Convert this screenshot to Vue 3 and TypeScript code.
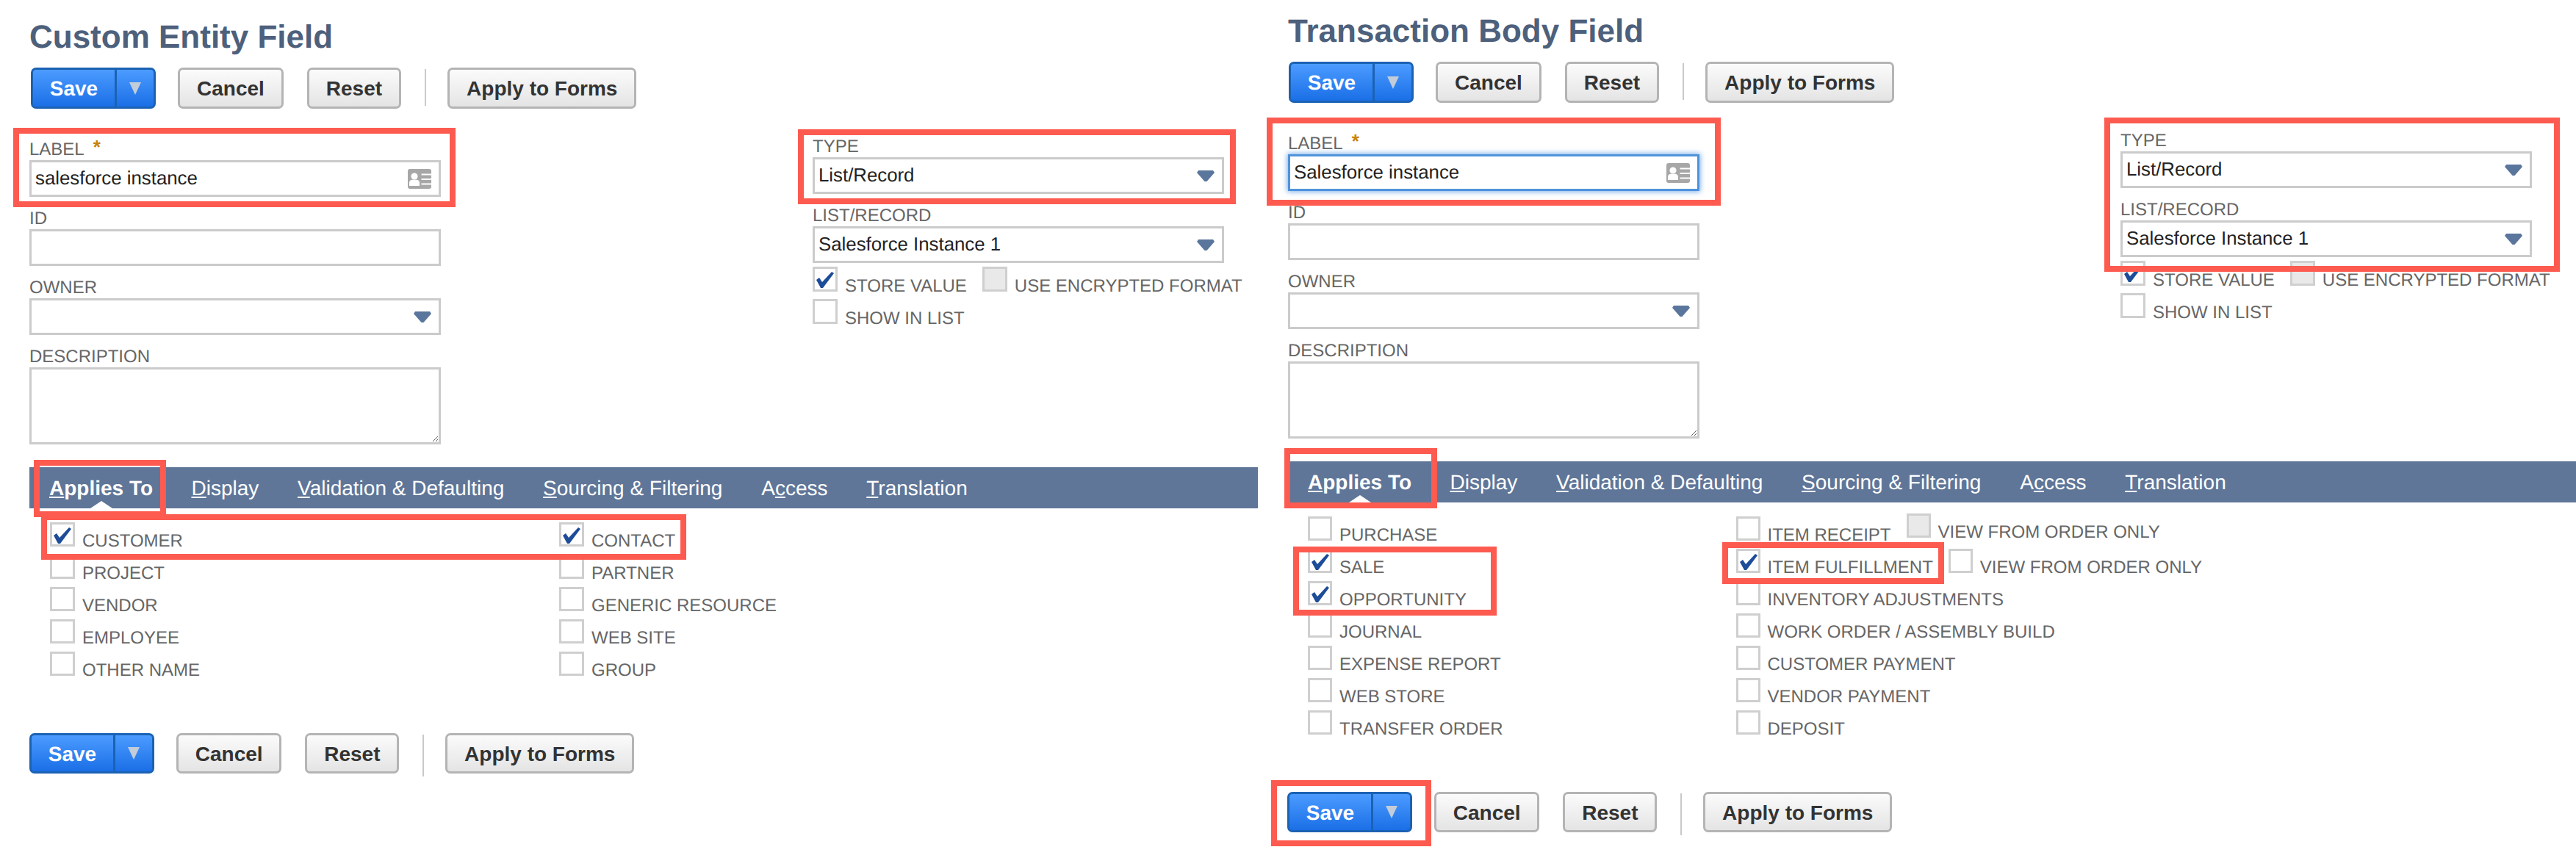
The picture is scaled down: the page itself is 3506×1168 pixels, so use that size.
<script setup lang="ts">
// Two NetSuite record forms side by side, with the red review boxes drawn over them.
interface Check {
  text: string
  checked?: boolean
  disabled?: boolean
  raised?: boolean
}

interface Mark {
  x: number
  y: number
  w: number
  h: number
}

interface Panel {
  id: string
  title: string
  labelValue: string
  focused: boolean
  columns: Check[][][]
  marks: Mark[]
}

const tabs = [
  { before: '', key: 'A', after: 'pplies To', active: true },
  { before: '', key: 'D', after: 'isplay' },
  { before: '', key: 'V', after: 'alidation & Defaulting' },
  { before: '', key: 'S', after: 'ourcing & Filtering' },
  { before: 'A', key: 'c', after: 'cess' },
  { before: '', key: 'T', after: 'ranslation' },
]

const single = (text: string, checked = false): Check[] => [{ text, checked }]

const panels: Panel[] = [
  {
    id: 'entity',
    title: 'Custom Entity Field',
    labelValue: 'salesforce instance',
    focused: false,
    columns: [
      [single('CUSTOMER', true), single('PROJECT'), single('VENDOR'), single('EMPLOYEE'), single('OTHER NAME')],
      [single('CONTACT', true), single('PARTNER'), single('GENERIC RESOURCE'), single('WEB SITE'), single('GROUP')],
    ],
    marks: [
      { x: 18, y: 174, w: 602, h: 108 },
      { x: 1086, y: 176, w: 596, h: 102 },
      { x: 46, y: 626, w: 180, h: 78 },
      { x: 56, y: 700, w: 878, h: 62 },
    ],
  },
  {
    id: 'txn',
    title: 'Transaction Body Field',
    labelValue: 'Salesforce instance',
    focused: true,
    columns: [
      [
        single('PURCHASE'),
        single('SALE', true),
        single('OPPORTUNITY', true),
        single('JOURNAL'),
        single('EXPENSE REPORT'),
        single('WEB STORE'),
        single('TRANSFER ORDER'),
      ],
      [
        [{ text: 'ITEM RECEIPT' }, { text: 'VIEW FROM ORDER ONLY', disabled: true, raised: true }],
        [{ text: 'ITEM FULFILLMENT', checked: true }, { text: 'VIEW FROM ORDER ONLY' }],
        single('INVENTORY ADJUSTMENTS'),
        single('WORK ORDER / ASSEMBLY BUILD'),
        single('CUSTOMER PAYMENT'),
        single('VENDOR PAYMENT'),
        single('DEPOSIT'),
      ],
    ],
    marks: [
      { x: 11, y: 160, w: 618, h: 120 },
      { x: 1151, y: 160, w: 620, h: 210 },
      { x: 35, y: 610, w: 208, h: 82 },
      { x: 47, y: 744, w: 277, h: 94 },
      { x: 631, y: 738, w: 302, h: 57 },
      { x: 17, y: 1062, w: 218, h: 90 },
    ],
  },
]

const typeChecks: Check[][] = [
  [{ text: 'STORE VALUE', checked: true }, { text: 'USE ENCRYPTED FORMAT', disabled: true }],
  [{ text: 'SHOW IN LIST' }],
]

const markStyle = (m: Mark) => ({
  left: `${m.x}px`,
  top: `${m.y}px`,
  width: `${m.w}px`,
  height: `${m.h}px`,
})
</script>

<template>
  <div class="page">
    <section v-for="panel in panels" :key="panel.id" class="panel" :class="`panel--${panel.id}`">
      <h1 class="title">{{ panel.title }}</h1>

      <div class="toolbar">
        <div class="save">
          <span class="save__main">Save</span>
          <span class="save__drop"><i class="save__arrow" /></span>
        </div>
        <button class="btn" type="button">Cancel</button>
        <button class="btn" type="button">Reset</button>
        <span class="toolbar__sep" />
        <button class="btn" type="button">Apply to Forms</button>
      </div>

      <div class="form">
        <div class="col col--main">
          <div class="field">
            <label class="field__label">LABEL<span class="req">*</span></label>
            <div class="box" :class="{ 'box--focus': panel.focused }">
              <span>{{ panel.labelValue }}</span>
              <svg class="card-icon" viewBox="0 0 32 27" width="32" height="27" aria-hidden="true">
                <rect width="32" height="27" rx="3" fill="#a7a7a7" />
                <circle cx="9" cy="10" r="4.6" fill="#fff" />
                <path d="M2 23v-4.5c0-2.5 2-3.8 4-3.8h6c2 0 4 1.300 4 3.800V23z" fill="#fff" />
                <path d="M18.500 7.500H32M18.500 14H32M18.500 20.500H32" stroke="#fff" stroke-width="2" />
              </svg>
            </div>
          </div>
          <div class="field">
            <label class="field__label">ID</label>
            <div class="box" />
          </div>
          <div class="field">
            <label class="field__label">OWNER</label>
            <div class="box">
              <span />
              <svg class="chev" viewBox="0 0 24 15" width="24" height="15" aria-hidden="true">
                <path d="M2 0h20l2 3-10.500 12h-3L0 3z" fill="#5b769c" />
              </svg>
            </div>
          </div>
          <div class="field">
            <label class="field__label">DESCRIPTION</label>
            <textarea class="area" />
          </div>
        </div>

        <div class="col col--type">
          <div class="field">
            <label class="field__label">TYPE</label>
            <div class="box">
              <span>List/Record</span>
              <svg class="chev" viewBox="0 0 24 15" width="24" height="15" aria-hidden="true">
                <path d="M2 0h20l2 3-10.500 12h-3L0 3z" fill="#5b769c" />
              </svg>
            </div>
          </div>
          <div class="field">
            <label class="field__label">LIST/RECORD</label>
            <div class="box">
              <span>Salesforce Instance 1</span>
              <svg class="chev" viewBox="0 0 24 15" width="24" height="15" aria-hidden="true">
                <path d="M2 0h20l2 3-10.500 12h-3L0 3z" fill="#5b769c" />
              </svg>
            </div>
          </div>
          <div class="type-checks">
            <div v-for="(row, r) in typeChecks" :key="r" class="check-row">
              <div v-for="c in row" :key="c.text" class="check">
                <span class="check__box check__box--tall" :class="{ 'check__box--off': c.disabled }">
                  <svg v-if="c.checked" viewBox="0 0 34 33" width="34" height="33" aria-hidden="true">
                    <path d="M5 18l4-3 4 6L26 7l3 2-15 20h-3z" fill="#1d4c99" />
                  </svg>
                </span>
                <span class="check__text">{{ c.text }}</span>
              </div>
            </div>
          </div>
        </div>
      </div>

      <nav class="tabs">
        <a v-for="t in tabs" :key="t.key" class="tab" :class="{ 'tab--active': t.active }">
          {{ t.before }}<u>{{ t.key }}</u>{{ t.after }}
        </a>
      </nav>

      <div class="lists">
        <div v-for="(col, i) in panel.columns" :key="i" class="list" :class="`list--${i}`">
          <div v-for="(row, r) in col" :key="r" class="check-row">
            <div
              v-for="c in row"
              :key="c.text"
              class="check"
              :class="{ 'check--raised': c.raised }"
            >
              <span class="check__box" :class="{ 'check__box--off': c.disabled }">
                <svg v-if="c.checked" viewBox="0 0 34 33" width="34" height="33" aria-hidden="true">
                  <path d="M5 18l4-3 4 6L26 7l3 2-15 20h-3z" fill="#1d4c99" />
                </svg>
              </span>
              <span class="check__text">{{ c.text }}</span>
            </div>
          </div>
        </div>
      </div>

      <div class="toolbar toolbar--bottom">
        <div class="save">
          <span class="save__main">Save</span>
          <span class="save__drop"><i class="save__arrow" /></span>
        </div>
        <button class="btn" type="button">Cancel</button>
        <button class="btn" type="button">Reset</button>
        <span class="toolbar__sep" />
        <button class="btn" type="button">Apply to Forms</button>
      </div>

      <!-- review annotations sit on top of the form -->
      <div v-for="(m, i) in panel.marks" :key="i" class="mark" :style="markStyle(m)" />
    </section>
  </div>
</template>

<style scoped>
.page {
  display: flex;
  width: 3506px;
  height: 1168px;
  overflow: hidden;
  background: #fff;
  font-family: "Liberation Sans", Arial, sans-serif;
  text-rendering: geometricPrecision;
}

.panel {
  position: relative;
  box-sizing: border-box;
  padding-left: 40px;
}
.panel--entity {
  width: 1713px;
  padding-right: 1px;
  padding-top: 26px;
}
.panel--txn {
  width: 1793px;
  padding-top: 18px;
}

.title {
  margin: 0;
  font-size: 44px;
  line-height: 50px;
  font-weight: 700;
  color: #4d607c;
}

.toolbar {
  display: flex;
  align-items: flex-start;
  gap: 32px;
  height: 56px;
  margin: 16px 0 0 2px;
}
.panel--txn .toolbar {
  margin-left: 1px;
}
.toolbar.toolbar--bottom {
  height: 55px;
  margin: 67px 0 0;
}
.panel--txn .toolbar.toolbar--bottom {
  margin-left: -1px;
}

.save {
  display: flex;
  box-sizing: border-box;
  width: 170px;
  height: 56px;
  margin-right: -2px;
  border: 3px solid #1b62b4;
  border-radius: 7px;
  overflow: hidden;
  background: linear-gradient(#4b9bff, #1b6fe6);
  color: #fff;
  font-size: 28px;
  font-weight: 700;
}
.save__main {
  display: flex;
  flex: 1;
  align-items: center;
  justify-content: center;
  padding-top: 2px;
}
.save__drop {
  display: flex;
  align-items: center;
  justify-content: center;
  width: 50px;
  border-left: 3px solid #1b62b4;
}
.save__arrow {
  width: 0;
  height: 0;
  border-left: 8px solid transparent;
  border-right: 8px solid transparent;
  border-top: 17px solid #c3ccd9;
}

.btn {
  box-sizing: border-box;
  height: 56px;
  padding: 2px 23px 0;
  border: 3px solid #b4b4b4;
  border-radius: 7px;
  background: linear-gradient(#fbfbfb, #e4e4e4);
  color: #333;
  font: 700 28px "Liberation Sans", Arial, sans-serif;
}

.toolbar--bottom .save,
.toolbar--bottom .btn {
  height: 55px;
}
.toolbar--bottom .btn {
  padding: 2px 22.800px 0;
}

.toolbar__sep {
  width: 2px;
  height: 50px;
  margin: 2px -3px 0 0;
  background: #c9c9c9;
}
.toolbar--bottom .toolbar__sep {
  height: 57px;
  margin-top: 2px;
}

.form {
  display: flex;
  padding-top: 22px;
}
.panel--entity .form {
  gap: 506px;
}
.panel--txn .form {
  gap: 573px;
}

.col {
  width: 560px;
}
.col--main {
  padding-top: 4px;
}

.field {
  padding-top: 16px;
}
.field__label {
  display: block;
  font-size: 24px;
  line-height: 28px;
  color: #666;
}
.req {
  margin-left: 12px;
  font-size: 26px;
  line-height: 0;
  font-weight: 700;
  color: #c9820a;
  vertical-align: 2px;
}

.box {
  display: flex;
  align-items: center;
  justify-content: space-between;
  box-sizing: border-box;
  height: 50px;
  padding: 0 10px 0 5px;
  border: 3px solid #cbcbcb;
  color: #222;
  font-size: 25.800px;
}
.box--focus {
  border-color: #4f92db;
  box-shadow: 0 0 7px 1px rgba(74, 144, 226, 0.75);
}

.area {
  display: block;
  box-sizing: border-box;
  width: 100%;
  height: 105px;
  margin: 0;
  border: 3px solid #cbcbcb;
  border-radius: 0;
  outline: none;
}

.type-checks {
  padding-top: 5px;
}

.tabs {
  display: flex;
  height: 56px;
  margin-top: 31px;
  padding-left: 1px;
  background: #5f7698;
}
.tab {
  position: relative;
  padding: 0 26.400px;
  color: #fff;
  font-size: 28px;
  line-height: 58px;
  white-space: pre;
}
.tab--active {
  padding: 0 26px;
  font-weight: 700;
}
.tab--active::after {
  content: "";
  position: absolute;
  left: 50%;
  bottom: 0;
  margin-left: -15px;
  border-left: 15px solid transparent;
  border-right: 15px solid transparent;
  border-bottom: 10px solid #fff;
}

.lists {
  display: flex;
  padding: 19px 0 0 28px;
}
.panel--txn .lists {
  padding-left: 27px;
}
.panel--entity .list--0 {
  width: 693px;
}
.panel--txn .list--0 {
  width: 582.500px;
}

.check-row {
  display: flex;
  height: 44px;
  gap: 21px;
}
.check {
  display: flex;
  align-items: baseline;
  gap: 10px;
}
.check--raised {
  transform: translateY(-4px);
}
.check__box {
  display: block;
  box-sizing: border-box;
  width: 34px;
  height: 33px;
  border: 3px solid #cfcfcf;
  overflow: visible;
}
.panel--txn .lists .check__box {
  width: 33px;
}
.check__box--tall {
  height: 34px;
}
.check__box--off {
  background: #e9e9e9;
}
.check__box svg {
  display: block;
  margin: -3px;
}
.check__text {
  font-size: 24px;
  line-height: 28px;
  color: #666;
  white-space: nowrap;
}

.mark {
  position: absolute;
  box-sizing: border-box;
  border: 8px solid #fd5b50;
  pointer-events: none;
}
</style>

<style>
html,
body {
  margin: 0;
  background: #fff;
}
</style>
